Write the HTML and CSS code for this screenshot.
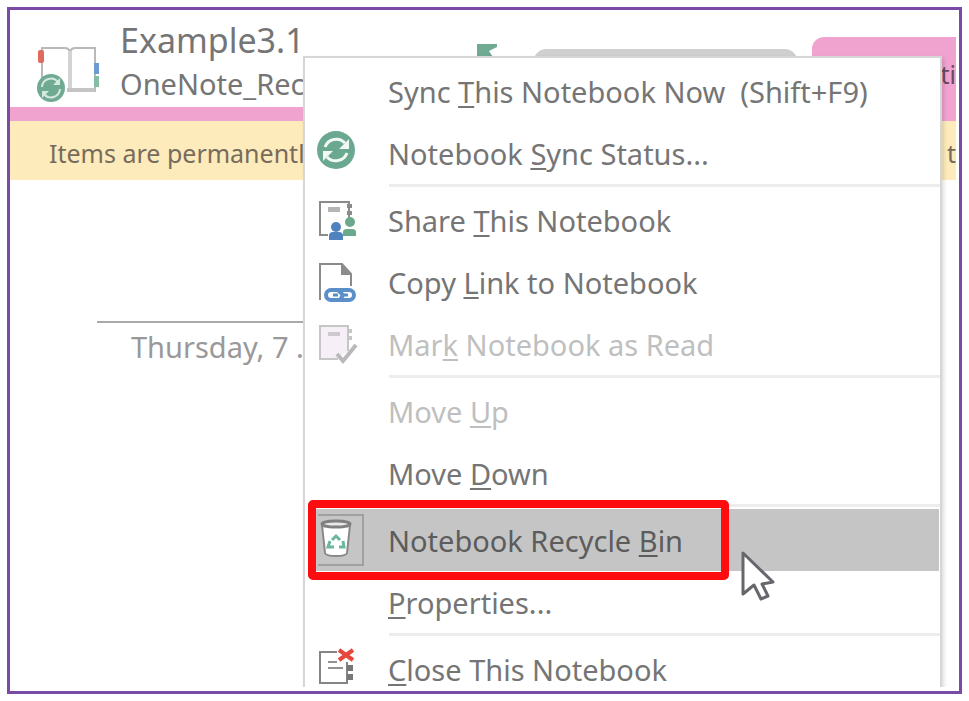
FILE: index.html
```html
<!DOCTYPE html>
<html lang="en">
<head>
<meta charset="utf-8">
<title>Notebook menu</title>
<link rel="stylesheet" href="styles.css">
</head>
<body>
<main class="frame">
  <div class="page">
    <header class="header">
      <svg class="book-icon" viewBox="0 0 64 60" aria-hidden="true">
        <path d="M5 50V4H28Q31 4 33 7Q35 4 38 4H58V47H34" fill="none" stroke="#b9b9b9" stroke-width="2"/>
        <path d="M33 7V46" fill="none" stroke="#d3d3d3" stroke-width="4"/>
        <path d="M30 46H58" stroke="#c4c4c4" stroke-width="4"/>
        <rect x="1" y="6" width="6" height="13" rx="2" fill="#e06a5c"/>
        <path d="M57 19h5v11h-5z" fill="#6d9bd1"/>
        <path d="M57 32h5v11h-5z" fill="#84bda3"/>
        <circle cx="14" cy="44" r="14" fill="#6fab93"/>
        <path d="M5 43a9 9 0 0 1 16-5M23 45a9 9 0 0 1-16 5" fill="none" stroke="#d4e8e0" stroke-width="2"/>
        <path d="M23 34v7h-7zM5 54v-7h7z" fill="#d4e8e0"/>
      </svg>
      <div class="titles">
        <h1 class="title">Example3.1</h1>
        <p class="subtitle">OneNote_Rec</p>
      </div>
      <svg class="back-arrow" viewBox="0 0 20 16" aria-hidden="true"><path d="M0 0H20V3L12 7L18 16H0z" fill="#6fab93"/></svg>
      <div class="tab"></div>
      <div class="tab tab-active">ti</div>
    </header>
    <div class="strip"></div>
    <div class="notice"><span>Items are permanentl</span><span>t</span></div>
    <p class="date">Thursday, 7 .</p>

    <ul class="menu">
      <li class="item"><button class="command"><span class="icon"></span><span>Sync <u>T</u>his Notebook Now&nbsp; (Shift+F9)</span></button></li>
      <li class="item"><button class="command">
        <svg class="icon" viewBox="0 0 40 40" aria-hidden="true">
          <circle cx="18" cy="17" r="19" fill="#6aa890"/>
          <path d="M7 14a12 12 0 0 1 20-4M29 20a12 12 0 0 1-20 4" fill="none" stroke="#f2f8f5" stroke-width="3"/>
          <path d="M31 6v10H21zM5 28V18h10z" fill="#f2f8f5"/>
        </svg><span>Notebook <u>S</u>ync Status...</span></button></li>
      <li class="rule"></li>
      <li class="item"><button class="command">
        <svg class="icon" viewBox="0 0 40 40" aria-hidden="true">
          <path d="M10 35H2V2H31V18" fill="none" stroke="#8b8b8b" stroke-width="2"/>
          <path d="M29 4h5v4h-5zM29 11h5v4h-5z" fill="#8b8b8b"/>
          <path d="M10 7h12v5H10z" fill="#b5b5b5"/>
          <circle cx="32" cy="22" r="5" fill="#6aa98b"/><path d="M25 36v-4q0-3 4-3h5q4 0 4 3v4z" fill="#6aa98b"/>
          <circle cx="18" cy="27" r="5" fill="#4f83bf"/><path d="M11 40v-4q0-4 4-4h6q4 0 4 4v4z" fill="#4f83bf"/>
        </svg><span>Share <u>T</u>his Notebook</span></button></li>
      <li class="item"><button class="command">
        <svg class="icon" viewBox="0 0 40 40" aria-hidden="true">
          <path d="M2 38V2H24L33 12V24" fill="none" stroke="#8b8b8b" stroke-width="2"/>
          <path d="M23 2v11h10z" fill="#8b8b8b"/>
          <rect x="8" y="28" width="28" height="10" rx="5" fill="#fff" stroke="#5b8fc9" stroke-width="4"/>
          <path d="M20 28l5 5-3 5" fill="none" stroke="#5b8fc9" stroke-width="4"/>
          <path d="M15 33h5M25 33h5" stroke="#5b8fc9" stroke-width="3"/>
        </svg><span>Copy <u>L</u>ink to Notebook</span></button></li>
      <li class="item"><button class="command" disabled>
        <svg class="icon" viewBox="0 0 40 40" aria-hidden="true">
          <path d="M20 35H2V2H30V27" fill="#f6eff7" stroke="#c6c6c6" stroke-width="2"/>
          <path d="M29 5h5v4h-5zM29 12h5v4h-5z" fill="#c6c6c6"/>
          <path d="M10 8h12v4H10z" fill="#cec9cf"/>
          <path d="M19 30l6 7 13-16" fill="none" stroke="#b9b9b9" stroke-width="4"/>
        </svg><span>Mar<u>k</u> Notebook as Read</span></button></li>
      <li class="rule"></li>
      <li class="item"><button class="command" disabled><span class="icon"></span><span>Move <u>U</u>p</span></button></li>
      <li class="item"><button class="command"><span class="icon"></span><span>Move <u>D</u>own</span></button></li>
      <li class="rule"></li>
      <li class="item item-hover"><button class="command">
        <svg class="icon icon-framed" viewBox="0 0 46 52" aria-hidden="true">
          <path d="M0 1H45V51H0" fill="none" stroke="#a0a0a0" stroke-width="2"/>
          <path d="M4 11L7 39q1 3 11 3t11-3L32 11z" fill="#fff" stroke="#888" stroke-width="2"/>
          <ellipse cx="18" cy="10" rx="14" ry="3" fill="#e9e9e9" stroke="#808080" stroke-width="3"/>
          <path d="M14 26l4-4 4 4M25 27l1 6h-5M16 33h-6l2-6" fill="none" stroke="#6bb79a" stroke-width="3"/>
        </svg><span>Notebook Recycle <u>B</u>in</span></button>
        <span class="highlight"></span>
        <svg class="cursor" viewBox="0 0 36 52" aria-hidden="true"><path d="M3 3V44L14 35L21 49L28 46L22 34L33 32z" fill="#fff" stroke="#66666c" stroke-width="3" stroke-linejoin="round"/></svg>
      </li>
      <li class="item"><button class="command"><span class="icon"></span><span><u>P</u>roperties...</span></button></li>
      <li class="rule"></li>
      <li class="item"><button class="command">
        <svg class="icon" viewBox="0 0 40 40" aria-hidden="true">
          <path d="M19 3H2V34H29V13" fill="none" stroke="#858585" stroke-width="2"/>
          <path d="M10 13h9M10 19h15" stroke="#929292" stroke-width="2"/>
          <path d="M29 16h6v6h-6zM29 25h6v6h-6z" fill="#777"/>
          <path d="M21 1l14 10M35 1L21 11" stroke="#e4483c" stroke-width="4"/>
        </svg><span><u>C</u>lose This Notebook</span></button></li>
    </ul>
  </div>
</main>
</body>
</html>
```
FILE: styles.css
```css
* { box-sizing: border-box; }

body {
  margin: 0;
  padding: 7px;
  height: 100vh;
  background: #fff;
  font-family: "Noto Sans", "Open Sans", sans-serif;
  color: #757575;
}

.frame {
  height: 100%;
  padding: 0 3px 4px 0;
  border: 3px solid #7b4aa5;
}

.page {
  position: relative;
  height: 100%;
  overflow: hidden;
}

.header {
  display: flex;
  height: 97px;
  padding-left: 27px;
}

.book-icon {
  flex: none;
  width: 64px;
  height: 60px;
  margin-top: 34px;
}

.titles {
  flex: none;
  width: 357px;
  margin: 8px 0 0 19px;
  white-space: nowrap;
}

.title {
  margin: 0;
  font-size: 34px;
  font-weight: 400;
  line-height: 44px;
}

.subtitle {
  margin: 0;
  font-size: 29px;
  line-height: 44px;
}

.back-arrow {
  flex: none;
  width: 20px;
  height: 16px;
  margin-top: 34px;
}

.tab {
  flex: none;
  width: 263px;
  margin: 39px 0 0 37px;
  border-radius: 12px 12px 0 0;
  background: #cfcfcf;
}

.tab-active {
  flex: 1;
  margin: 27px 0 0 15px;
  border-radius: 12px 0 0 0;
  overflow: hidden;
  background: #f0a3cf;
  font-size: 25px;
  line-height: 74px;
  text-align: right;
  color: #6b4a5e;
}

.strip {
  height: 14px;
  background: #f0a3cf;
}

.notice {
  display: flex;
  justify-content: space-between;
  height: 59px;
  padding-left: 39px;
  background: #fdebbb;
  color: #776c5c;
  font-size: 25px;
  line-height: 64px;
}

.date {
  width: 30%;
  margin: 141px 0 0 87px;
  padding-left: 34px;
  border-top: 2px solid #aaa;
  color: #999;
  font-size: 29px;
  line-height: 48px;
}

.menu {
  position: absolute;
  top: 46px;
  right: 14px;
  left: 293px;
  margin: 0;
  padding: 2px 0;
  border: 2px solid #d6d6d6;
  background: #fff;
  box-shadow: 2px 2px 4px #0002;
  list-style: none;
}

.item {
  position: relative;
  height: 62px;
}

.item-hover {
  margin: 0 1px 0 8px;
  background: #c5c5c5;
}

.command {
  display: flex;
  align-items: center;
  gap: 30px;
  width: 100%;
  height: 100%;
  padding: 0 0 0 13px;
  border: 0;
  background: none;
  color: #757575;
  font: inherit;
  font-size: 29px;
  white-space: nowrap;
}

.command:disabled {
  color: #bfbfbf;
}

.command u {
  text-decoration-thickness: 2px;
  text-underline-offset: 3px;
}

.item-hover .command {
  padding-left: 5px;
  color: #5c5c5c;
}

.icon {
  flex: none;
  width: 40px;
  height: 40px;
  overflow: visible;
}

.icon-framed {
  width: 46px;
  height: 52px;
  margin-right: -6px;
}

.rule {
  height: 3px;
  margin: 0 0 2px 84px;
  background: #ededed;
}

.highlight {
  position: absolute;
  top: -9px;
  left: -5px;
  width: 421px;
  height: 80px;
  border: 8px solid #fb0d10;
  border-radius: 5px;
}

.cursor {
  position: absolute;
  top: 41px;
  left: 427px;
  width: 36px;
  height: 52px;
  z-index: 1;
}
```
